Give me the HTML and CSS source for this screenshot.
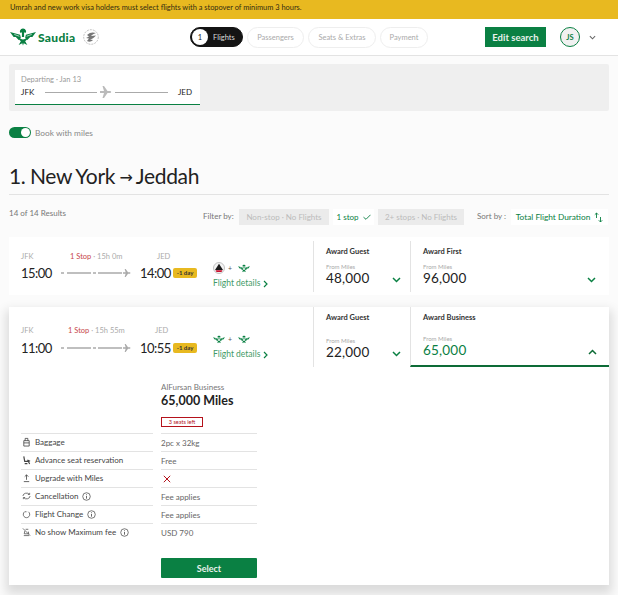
FILE: index.html
```html
<!DOCTYPE html>
<html lang="en">
<head>
<meta charset="utf-8">
<title>Saudia - Select flights</title>
<link rel="stylesheet" href="styles.css">
</head>
<body>
<svg class="defs" width="0" height="0" aria-hidden="true">
  <defs>
    <symbol id="wing" viewBox="0 0 36 24">
      <path d="M0 5 L14 9 L15 13 L12 16 L8 12 L5 12 Z" fill="#0a8043"/>
      <path d="M36 5 L22 9 L21 13 L24 16 L28 12 L31 12 Z" fill="#0a8043"/>
      <path d="M18 0 C14 1 13 4 14 6 C16 5 20 5 22 6 C23 4 22 1 18 0Z" fill="#0a8043"/>
      <path d="M16.500 5 H19.500 V12 H16.500Z" fill="#0a8043"/>
      <path d="M12 11 C15 17 21 17 24 11 L25 14 L21 18 L24 23 L19 20.500 L18 24 L17 20.500 L12 23 L15 18 L11 14 Z" fill="#0a8043"/>
      <path d="M6 8.500 L13 11 M30 8.500 L23 11" stroke="#fff" stroke-width=".9" fill="none"/>
    </symbol>
    <symbol id="plane" viewBox="0 0 12 12">
      <path d="M0 5 L4 5 L2.500 0 L4 0 L7.500 5 L10.500 5 Q12 6 10.500 7 L7.500 7 L4 12 L2.500 12 L4 7 L0 7 Z"/>
    </symbol>
    <symbol id="info" viewBox="0 0 10 10">
      <circle cx="5" cy="5" r="4.200" fill="none" stroke="#444" stroke-width=".8"/>
      <path d="M5 4.300V7.400M5 2.600V3.400" stroke="#444" stroke-width=".9"/>
    </symbol>
    <symbol id="delta" viewBox="0 0 12 12">
      <circle cx="6" cy="6" r="5.500" fill="#f4f4f4" stroke="#aaa" stroke-width=".7"/>
      <path d="M6 1.800 L10 8 L2 8 Z" fill="#1c1c1c"/>
      <path d="M2.500 8.300 H9.500 L8.500 10 H3.500 Z" fill="#c8102e"/>
    </symbol>
  </defs>
</svg>

<div class="banner">Umrah and new work visa holders must select flights with a stopover of minimum 3 hours.</div>

<header class="topbar">
  <div class="brand">
    <svg class="brand-mark" viewBox="0 0 36 24"><use href="#wing"/></svg>
    <span class="brand-name">Saudia</span>
    <svg class="skyteam" viewBox="0 0 16 16">
      <circle cx="8" cy="8" r="7.300" fill="#fff" stroke="#999" stroke-width=".6" stroke-dasharray="2 1"/>
      <path d="M4 6 C7 3 10 3 13 4 C10 5 9 6 8 7 L13 6.500 C11 9 9 10 7 10.500 L10 11 C8 13 6 13 4 12 L6 9.500 L3 9 L6 7.500 Z" fill="#777"/>
    </svg>
  </div>
  <nav class="steps">
    <div class="step step-active"><span class="step-num">1</span>Flights</div>
    <div class="step step-pass">Passengers</div>
    <div class="step step-seats">Seats &amp; Extras</div>
    <div class="step step-pay">Payment</div>
  </nav>
  <button class="edit-btn">Edit search</button>
  <div class="avatar">JS</div>
  <svg class="caret" viewBox="0 0 8 5"><path d="M1 1 L4 4 L7 1" fill="none" stroke="#666" stroke-width="1.200"/></svg>
</header>

<main class="content">
  <section class="search-panel">
    <div class="leg-tab">
      <div class="leg-date">Departing · Jan 13</div>
      <div class="leg-route">
        <span>JFK</span>
        <i class="rule rule-a"></i>
        <svg class="leg-plane" viewBox="0 0 12 12"><use href="#plane"/></svg>
        <i class="rule rule-b"></i>
        <span class="leg-dest">JED</span>
      </div>
    </div>
  </section>

  <div class="miles-toggle">
    <span class="switch"><span class="knob"></span></span>
    <span>Book with miles</span>
  </div>

  <h1 class="title">1. New York <span class="title-arrow">→</span> Jeddah</h1>

  <div class="filters">
    <div class="count">14 of 14 Results</div>
    <div class="filter-label">Filter by:</div>
    <div class="chip chip-off chip-a">Non-stop · No Flights</div>
    <div class="chip chip-on">1 stop
      <svg class="tick" viewBox="0 0 8 6"><path d="M.5 3.200 L3 5.300 L7.500 .8" fill="none" stroke="#0a8043" stroke-width=".9"/></svg>
    </div>
    <div class="chip chip-off chip-b">2+ stops · No Flights</div>
    <div class="sort-label">Sort by :</div>
    <div class="chip chip-on chip-sort">Total Flight Duration
      <svg class="sort-ic" viewBox="0 0 9 11"><path d="M2.500 6V1M.8 2.700 L2.500 1 L4.200 2.700M6.500 5V10M4.800 8.300 L6.500 10 L8.200 8.300" fill="none" stroke="#0a8043" stroke-width=".9"/></svg>
    </div>
  </div>

  <article class="card card-one">
    <div class="flight">
      <div class="codes">
        <span class="code-from">JFK</span>
        <span class="stops"><b>1 Stop</b> · 15h 0m</span>
        <span class="code-to">JED</span>
      </div>
      <div class="times">
        <span class="time time-dep">15:00</span>
        <svg class="path" viewBox="0 0 70 8"><path d="M0 4H3M6 4H30M32 4H35M37 4H61" stroke="#aaa" fill="none" stroke-width="1.500"/><use href="#plane" x="62" y="0" width="8" height="8" fill="#aaa"/></svg>
        <span class="time time-arr">14:00</span>
        <span class="day">-1 day</span>
      </div>
    </div>
    <div class="carriers">
      <div class="logos">
        <svg class="logo-round" viewBox="0 0 12 12"><use href="#delta"/></svg>
        <span class="plus">+</span>
        <svg class="logo-wing" viewBox="0 0 36 24"><use href="#wing"/></svg>
      </div>
      <div class="details">Flight details <svg class="chev" viewBox="0 0 5 8"><path d="M1 1 L4 4 L1 7" fill="none" stroke="#0a8043" stroke-width="1.200"/></svg></div>
    </div>
    <div class="fare">
      <div class="fare-name">Award Guest</div>
      <div class="fare-from">From Miles</div>
      <div class="fare-row"><span class="fare-val">48,000</span>
        <svg class="arrow" viewBox="0 0 9 6"><path d="M1 1 L4.500 4.500 L8 1" fill="none" stroke="#0a8043" stroke-width="1.500"/></svg></div>
    </div>
    <div class="fare fare-wide">
      <div class="fare-name">Award First</div>
      <div class="fare-from">From Miles</div>
      <div class="fare-row"><span class="fare-val">96,000</span>
        <svg class="arrow" viewBox="0 0 9 6"><path d="M1 1 L4.500 4.500 L8 1" fill="none" stroke="#0a8043" stroke-width="1.500"/></svg></div>
    </div>
  </article>

  <article class="card card-two">
    <div class="card-head">
      <div class="flight">
        <div class="codes">
          <span class="code-from">JFK</span>
          <span class="stops stops-long"><b>1 Stop</b> · 15h 55m</span>
          <span class="code-to">JED</span>
        </div>
        <div class="times">
          <span class="time time-dep">11:00</span>
          <svg class="path" viewBox="0 0 70 8"><path d="M0 4H3M6 4H30M32 4H35M37 4H61" stroke="#aaa" fill="none" stroke-width="1.500"/><use href="#plane" x="62" y="0" width="8" height="8" fill="#aaa"/></svg>
          <span class="time time-arr">10:55</span>
          <span class="day">-1 day</span>
        </div>
      </div>
      <div class="carriers">
        <div class="logos">
          <svg class="logo-wing logo-first" viewBox="0 0 36 24"><use href="#wing"/></svg>
          <span class="plus">+</span>
          <svg class="logo-wing" viewBox="0 0 36 24"><use href="#wing"/></svg>
        </div>
        <div class="details">Flight details <svg class="chev" viewBox="0 0 5 8"><path d="M1 1 L4 4 L1 7" fill="none" stroke="#0a8043" stroke-width="1.200"/></svg></div>
      </div>
      <div class="fare">
        <div class="fare-name">Award Guest</div>
        <div class="fare-from">From Miles</div>
        <div class="fare-row"><span class="fare-val">22,000</span>
          <svg class="arrow" viewBox="0 0 9 6"><path d="M1 1 L4.500 4.500 L8 1" fill="none" stroke="#0a8043" stroke-width="1.500"/></svg></div>
      </div>
      <div class="fare fare-wide fare-open">
        <div class="fare-name">Award Business</div>
        <div class="fare-from">From Miles</div>
        <div class="fare-row"><span class="fare-val">65,000</span>
          <svg class="arrow" viewBox="0 0 9 6"><path d="M1 5 L4.500 1.500 L8 5" fill="none" stroke="#0d6b36" stroke-width="1.500"/></svg></div>
      </div>
    </div>

    <div class="detail">
      <div class="detail-head">
        <div class="plan">AlFursan Business</div>
        <div class="plan-miles">65,000 Miles</div>
        <div class="seats">3 seats left</div>
      </div>
      <div class="rows">
        <div class="label">
          <svg class="ic" viewBox="0 0 10 10"><path d="M2 3.500H8V9.500H2ZM3.500 3.500V1H6.500V3.500M2 6H8" fill="none" stroke="#444" stroke-width=".9"/></svg>Baggage</div>
        <div class="value">2pc x 32kg</div>
        <div class="label">
          <svg class="ic" viewBox="0 0 10 10"><path d="M2 1L3 6.500H7L8.500 9.500M3 9H6M6 5L9 6.500" fill="none" stroke="#444" stroke-width="1.300"/></svg>Advance seat reservation</div>
        <div class="value">Free</div>
        <div class="label">
          <svg class="ic" viewBox="0 0 10 10"><path d="M5 7V1.500M3 3.500L5 1.500L7 3.500M2 9H8" fill="none" stroke="#444" stroke-width=".9"/></svg>Upgrade with Miles</div>
        <div class="value"><svg class="cross" viewBox="0 0 8 8"><path d="M.8 .8L7.200 7.200M7.200 .8L.8 7.200" stroke="#b5121b" stroke-width="1"/></svg></div>
        <div class="label">
          <svg class="ic" viewBox="0 0 10 10"><path d="M1 5A4 3.500 0 0 1 8 3M9 5A4 3.500 0 0 1 2 7M8.500 1.500V3.300H6.500M1.500 8.500V6.700H3.500" fill="none" stroke="#444" stroke-width=".8"/></svg>Cancellation<svg class="inf" viewBox="0 0 10 10"><use href="#info"/></svg></div>
        <div class="value">Fee applies</div>
        <div class="label">
          <svg class="ic" viewBox="0 0 10 10"><path d="M3 2.500A3.600 3.600 0 1 0 7 2.500M3 2.500H5" fill="none" stroke="#444" stroke-width=".8"/></svg>Flight Change<svg class="inf" viewBox="0 0 10 10"><use href="#info"/></svg></div>
        <div class="value">Fee applies</div>
        <div class="label">
          <svg class="ic" viewBox="0 0 10 10"><path d="M1 1L9 9M2 9H8M3 4L2.500 7H7.500L7 4.500M4 2H7" fill="none" stroke="#444" stroke-width=".8"/></svg>No show Maximum fee<svg class="inf" viewBox="0 0 10 10"><use href="#info"/></svg></div>
        <div class="value">USD 790</div>
      </div>
      <button class="select-btn">Select</button>
    </div>
  </article>
</main>
</body>
</html>
```

FILE: styles.css
```css
* { box-sizing: border-box; }
html, body { margin: 0; padding: 0; height: 595px; overflow: hidden; }
body { background: #fbfbfb; color: #222; font-family: Lato, "Liberation Sans", sans-serif; font-size: 8px; }
.defs { display: block; height: 0; }
svg { display: block; flex: none; }

.banner { height: 19px; background: #e8b920; color: #332c12; padding: 3px 0 0 10px; font-size: 7.430px; line-height: 10px; }

.topbar { height: 37px; background: #fff; border-bottom: 1px solid #e3e3e3; display: flex; align-items: center; }
.brand { display: flex; align-items: center; width: 190px; padding-left: 10px; }
.brand-mark { width: 26px; height: 18px; }
.brand-name { margin-left: 2px; color: #0a8043; font-size: 12px; font-weight: 900; letter-spacing: .3px; width: 43px; }
.skyteam { width: 16px; height: 16px; margin-left: 2px; }
.steps { display: flex; gap: 4px; width: 295px; align-items: center; }
.step { height: 21px; border: 1px solid #eee; border-radius: 11px; display: flex; align-items: center; justify-content: center; color: #aaa; font-size: 7.500px; }
.step-active { width: 53px; height: 20px; background: #141414; border-color: #141414; color: #ddd; justify-content: flex-start; }
.step-num { width: 16px; height: 16px; margin: 0 5px 0 1px; background: #fff; color: #222; border-radius: 50%; display: flex; align-items: center; justify-content: center; }
.step-pass { width: 57px; }
.step-seats { width: 68px; }
.step-pay { width: 48px; }
.edit-btn { width: 61px; height: 20px; padding: 0; border: 0; background: #0a8043; color: #e8f2ec; font: 700 9.500px Lato, "Liberation Sans", sans-serif; }
.avatar { width: 20px; height: 20px; margin-left: 14px; border: 1px solid #0a8043; border-radius: 50%; background: #f1f1f1; color: #0a8043; font-size: 7.500px; font-weight: 700; display: flex; align-items: center; justify-content: center; }
.caret { width: 7px; height: 5px; margin-left: 9px; }

.content { padding: 8px 9px 0; }
.search-panel { height: 47px; background: #efefef; border-radius: 2px; padding: 6px; }
.leg-tab { width: 185px; height: 35px; background: #fff; border-bottom: 1px solid #0a8043; padding: 4px 8px 0 6px; }
.leg-date { color: #999; font-size: 7.500px; line-height: 12px; }
.leg-route { display: flex; align-items: center; height: 12px; color: #222; font-size: 8px; }
.rule { display: block; height: 1px; background: #aaa; }
.rule-a { width: 52px; margin-left: 11px; }
.rule-b { width: 53px; }
.leg-plane { width: 12px; height: 12px; margin: 0 3px 0 3px; fill: #bbb; }
.leg-dest { margin-left: auto; }

.miles-toggle { display: flex; align-items: center; gap: 4px; margin-top: 16px; height: 11px; color: #888; font-size: 8.300px; }
.switch { width: 22px; height: 11px; background: #0a8043; border-radius: 6px; display: flex; justify-content: flex-end; padding: 1px; }
.knob { width: 9px; height: 9px; background: #fff; border-radius: 50%; }

.title { margin: 27px 0 0; height: 30px; font-size: 21px; line-height: 22px; font-weight: 400; color: #222; border-bottom: 1px solid #e3e3e3; letter-spacing: -.35px; word-spacing: -.5px; }
.title-arrow { font-size: 16px; font-family: "DejaVu Sans", sans-serif; vertical-align: 1px; letter-spacing: -3px; margin-right: 2px; }

.filters { display: flex; align-items: flex-start; height: 42px; color: #777; font-size: 8px; }
.count { width: 194px; margin-top: 13px; line-height: 11px; }
.filter-label { margin-top: 16px; width: 36px; line-height: 11px; }
.chip { height: 16px; margin-top: 14px; display: flex; align-items: center; justify-content: center; }
.chip-off { background: #ebebeb; color: #bbb; }
.chip-a { width: 90px; }
.chip-on { width: 41px; margin-left: 4px; background: #fff; color: #0a8043; gap: 4px; }
.chip-b { width: 86px; margin-left: 4px; }
.tick { width: 8px; height: 6px; }
.sort-label { margin: 16px 0 0 13px; width: 34px; line-height: 11px; }
.chip-sort { width: 97px; margin-left: 0; gap: 4px; font-size: 8.300px; }
.sort-ic { width: 9px; height: 11px; }

.card { background: #fff; display: flex; }
.card-one { height: 58px; }
.card-two { display: block; height: 278px; margin-top: 12px; box-shadow: 0 6px 10px 3px rgba(0,0,0,.13); }
.card-head { display: flex; height: 60px; }
.flight { width: 195px; padding: 15px 0 0 12px; }
.card-two .flight { padding-top: 19px; }
.codes { display: flex; color: #aaa; font-size: 7.500px; line-height: 10px; }
.code-from { width: 49px; }
.stops { width: 87px; color: #aaa; }
.stops-long { margin-left: -2px; }
.stops b { color: #c7484a; font-weight: 400; }
.times { display: flex; align-items: center; margin-top: 3px; height: 16px; }
.card-two .times { margin-top: 4px; }
.time { font-size: 13px; letter-spacing: -.5px; color: #222; }
.time-dep { width: 40px; }
.time-arr { width: 33px; }
.path { width: 70px; height: 8px; margin-right: 9px; }
.day { width: 24px; height: 10px; background: #e8b920; border-radius: 2px; color: #333; font-size: 6px; font-weight: 700; line-height: 10px; text-align: center; }
.carriers { width: 109px; padding: 25px 0 0 9px; }
.card-two .carriers { padding-top: 26px; }
.logos { display: flex; align-items: center; gap: 3px; height: 12px; }
.logo-round { width: 12px; height: 12px; }
.logo-wing { width: 12px; height: 9px; margin-left: 3px; }
.logo-first { margin-left: 0; }
.plus { color: #555; font-size: 7px; }
.details { display: flex; align-items: center; gap: 3px; margin-top: 4px; color: #3f9a67; font-size: 8.500px; line-height: 11px; }
.chev { width: 5px; height: 8px; }
.fare { width: 97px; margin: 4px 0 3px; padding: 6px 0 0 12px; border-left: 1px solid #e3e3e3; }
.fare-wide { width: 199px; }
.fare-name { color: #333; font-size: 7.500px; font-weight: 700; line-height: 10px; }
.fare-from { margin-top: 6px; color: #aaa; font-size: 6px; line-height: 8px; }
.fare-row { display: flex; align-items: center; justify-content: space-between; padding-right: 9px; height: 14px; }
.fare-wide .fare-row { padding-right: 13px; }
.fare-val { font-size: 13.500px; letter-spacing: .2px; color: #222; }
.arrow { width: 9px; height: 6px; margin-top: 4px; }
.card-two .fare { margin: 0; height: 60px; padding-top: 6px; }
.card-two .fare-from { margin-top: 14px; }
.card-two .fare-open .fare-from { margin-top: 12px; }
.fare-open { border-left: 1px solid #e3e3e3; border-bottom: 2px solid #0d6b36; }
.fare-open .fare-val { color: #0a8043; }
.fare-open .fare-row { padding-right: 12px; }

.detail { padding: 15px 0 0 12px; }
.detail-head { padding-left: 140px; height: 51px; }
.plan { color: #777; font-size: 8px; line-height: 11px; }
.plan-miles { margin-top: 1px; color: #222; font-size: 12.500px; font-weight: 700; line-height: 14px; }
.seats { width: 42px; height: 10px; margin-top: 9px; border: 1px solid #b5121b; color: #b5121b; font-size: 5.500px; line-height: 8px; text-align: center; }
.rows { display: grid; grid-template-columns: 132px 96px; column-gap: 8px; width: 236px; grid-auto-rows: 18px; }
.label, .value { border-top: 1px solid #e3e3e3; display: flex; align-items: center; color: #444; font-size: 8px; }
.label { padding-bottom: 1px; }
.value { color: #666; }
.ic { width: 9px; height: 10px; margin: 0 4px 0 1px; }
.inf { width: 9px; height: 9px; margin-left: 4px; }
.cross { width: 8px; height: 8px; margin-left: 2px; }
.select-btn { display: block; margin: 17px 0 0 140px; width: 96px; height: 20px; padding: 0; border: 0; border-radius: 1px; background: #0a8043; color: #e8f2ec; font: 700 9px Lato, "Liberation Sans", sans-serif; }
```
